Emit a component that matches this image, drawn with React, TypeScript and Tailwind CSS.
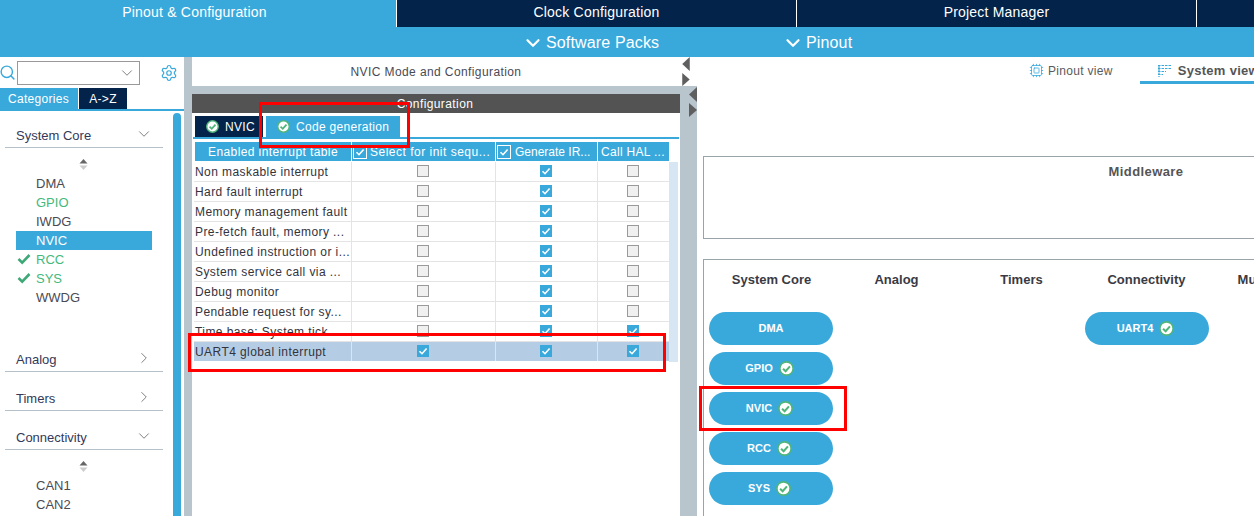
import React from "react";
import { ChevronDown, ChevronRight, Cpu, Search, Settings } from "lucide-react";

const FONT = "font-['Liberation_Sans',Arial,sans-serif]";

// Rond blanc avec coche verte (tabs et boutons)
const CheckBadge = ({ size = 13 }: { size?: number }) => (
  <svg width={size} height={size} viewBox="0 0 14 14" className="shrink-0">
    <circle cx="7" cy="7" r="6.2" fill="#fff" stroke="#4fb57a" strokeWidth="1.5" />
    <path d="M3.8 7.2 L6.2 9.5 L10.2 5" fill="none" stroke="#4fb57a" strokeWidth="1.9" />
  </svg>
);

const Tick = ({ color = "#fff" }: { color?: string }) => (
  <svg width="12" height="12" viewBox="0 0 12 12">
    <path d="M2.5 6.2 L5 8.7 L9.6 3.4" fill="none" stroke={color} strokeWidth="1.6" />
  </svg>
);

const Box = ({ on }: { on: boolean }) =>
  on ? (
    <span className="flex h-3 w-3 items-center justify-center bg-[#39a9dc]">
      <Tick />
    </span>
  ) : (
    <span className="h-3 w-3 border border-[#9a9a9a] bg-[#f0f0f0]" />
  );

const HeaderBox = () => (
  <span className="flex h-[14px] w-[14px] shrink-0 items-center justify-center border border-white">
    <Tick />
  </span>
);

const SortArrows = () => (
  <div className="flex h-[18px] justify-center pr-[1px]">
    <svg width="9" height="12" viewBox="0 0 9 12" className="mt-[3px] ml-[-5px]">
      <path d="M4.5 0 L8.5 4.5 H0.5 Z" fill="#666" />
      <path d="M4.5 11 L8.5 6.5 H0.5 Z" fill="#ccc" />
    </svg>
  </div>
);

const Category = ({ label, open, mt }: { label: string; open?: boolean; mt: string }) => (
  <div className={`${mt} ml-[5px] flex h-[23px] w-[158px] items-center justify-between border-b border-[#b5c0c8] pb-[1px] pl-[11px] pr-[10px] text-[13px] text-[#33395a]`}>
    <span>{label}</span>
    {open ? (
      <ChevronDown size={18} strokeWidth={1} className="mt-[-4px] text-[#555]" />
    ) : (
      <ChevronRight size={18} strokeWidth={1} className="mt-[-4px] text-[#555]" />
    )}
  </div>
);

const SideItem = ({ label, green, tick, active }: { label: string; green?: boolean; tick?: boolean; active?: boolean }) => (
  <div
    className={`relative ml-[16px] flex h-[19px] w-[136px] items-center pl-[20px] text-[13px] ${
      active ? "bg-[#39a9dc] text-white" : green ? "text-[#45b97c]" : "text-[#4a4a55]"
    }`}
  >
    {tick && (
      <svg width="14" height="12" viewBox="0 0 14 12" className="absolute left-[1px] top-[3px]">
        <path d="M1.5 6 L5.2 9.6 L12.5 2" fill="none" stroke="#3fa877" strokeWidth="2.6" />
      </svg>
    )}
    {label}
  </div>
);

const rows: [string, boolean, boolean, boolean][] = [
  ["Non maskable interrupt", false, true, false],
  ["Hard fault interrupt", false, true, false],
  ["Memory management fault", false, true, false],
  ["Pre-fetch fault, memory ...", false, true, false],
  ["Undefined instruction or i...", false, true, false],
  ["System service call via ...", false, true, false],
  ["Debug monitor", false, true, false],
  ["Pendable request for sy...", false, true, false],
  ["Time base: System tick ...", false, true, true],
  ["UART4 global interrupt", true, true, true],
];

const Pill = ({ label, check = true }: { label: string; check?: boolean }) => (
  <div className={`flex h-[33px] w-[124px] items-center justify-center gap-[6px] rounded-full bg-[#39a9dc] text-[11px] font-bold text-white ${check ? "pr-[3px]" : ""}`}>
    <span>{label}</span>
    {check && <CheckBadge size={15} />}
  </div>
);

const TriLeft = () => (
  <svg width="8" height="15" viewBox="0 0 8 15"><path d="M8 0 V15 L0 7.5 Z" fill="#5f5f5f" /></svg>
);
const TriRight = () => (
  <svg width="8" height="14" viewBox="0 0 8 14"><path d="M0 0 V14 L8 7 Z" fill="#5f5f5f" /></svg>
);

const SystemIcon = () => (
  <svg width="14" height="14" viewBox="0 0 14 14" stroke="#39a9dc" strokeWidth="1.2" strokeDasharray="2.5 1" className="shrink-0">
    <path d="M1 1.5 V13" fill="none" />
    <path d="M0 1.5 H14 M0 4.5 H14 M0 7.5 H8 M0 10.5 H5" fill="none" />
  </svg>
);

export default function App() {
  return (
    <div className={`${FONT} relative flex h-[516px] w-[1254px] flex-col overflow-hidden bg-white`}>
      {/* Onglets du haut */}
      <div className="flex h-[27px] pb-0 text-[14px] tracking-[0.2px] text-white">
        <div className="flex w-[396px] items-center justify-center bg-[#39a9dc] pb-[2px] pr-[7px]">Pinout &amp; Configuration</div>
        <div className="ml-px flex w-[399px] items-center justify-center bg-[#03234b] pb-[2px]">Clock Configuration</div>
        <div className="ml-px flex w-[399px] items-center justify-center bg-[#03234b] pb-[2px]">Project Manager</div>
        <div className="ml-px flex-1 bg-[#03234b]" />
      </div>
      <div className="flex h-[30px] items-center bg-[#39a9dc] pt-[1px] text-[16px] tracking-[0.15px] text-white">
        <div className="ml-[522px] flex w-[260px] items-center gap-[2px]">
          <ChevronDown size={22} strokeWidth={2.4} />
          Software Packs
        </div>
        <div className="flex items-center gap-[2px]">
          <ChevronDown size={22} strokeWidth={2.4} />
          Pinout
        </div>
      </div>

      <div className="flex min-h-0 flex-1">
        {/* Panneau gauche */}
        <div className="flex w-[184px] shrink-0">
          <div className="w-[173px] shrink-0">
            <div className="flex h-[31px] w-[184px] items-center">
              <Search size={17} strokeWidth={2} className="ml-[-1px] text-[#39a9dc]" />
              <div className="ml-[1px] flex h-[24px] w-[123px] items-center justify-end border border-[#999] pr-[3px]">
                <ChevronDown size={18} strokeWidth={1} className="text-[#555]" />
              </div>
              <Settings size={18} strokeWidth={1.6} className="ml-[20px] text-[#39a9dc]" />
            </div>
            <div className="flex h-[23px] w-[184px] border-b-2 border-[#39a9dc] text-[12px] tracking-[0.3px] text-white">
              <div className="flex w-[78px] items-center justify-center bg-[#39a9dc] pr-[1px]">Categories</div>
              <div className="ml-px flex w-[48px] items-center justify-center bg-[#03234b]">A-&gt;Z</div>
            </div>
            <Category label="System Core" open mt="mt-[14px]" />
            <div className="mt-[8px]">
              <SortArrows />
            </div>
            <div>
              <SideItem label="DMA" />
              <SideItem label="GPIO" green />
              <SideItem label="IWDG" />
              <SideItem label="NVIC" active />
              <SideItem label="RCC" green tick />
              <SideItem label="SYS" green tick />
              <SideItem label="WWDG" />
            </div>
            <Category label="Analog" mt="mt-[42px]" />
            <Category label="Timers" mt="mt-[16px]" />
            <Category label="Connectivity" open mt="mt-[16px]" />
            <div className="mt-[8px]">
              <SortArrows />
            </div>
            <SideItem label="CAN1" />
            <SideItem label="CAN2" />
          </div>
          <div className="mt-[56px] h-[420px] w-[8px] rounded-t-[4px] bg-[#39a9dc]" />
        </div>

        <div className="w-[8px] shrink-0 bg-[#b8c5cc]" />

        {/* Panneau central */}
        <div className="flex w-[505px] shrink-0 flex-col">
          <div className="flex h-[29px] items-stretch">
            <div className="flex w-[489px] items-center justify-center pr-[1px] text-[12px] tracking-[0.4px] text-[#4a4a55]">
              NVIC Mode and Configuration
            </div>
            <div className="flex flex-col gap-[2px] pl-[1px]">
              <TriLeft />
              <TriRight />
            </div>
          </div>
          <div className="flex min-h-0 flex-1 bg-[#b8c5cc]">
            <div className="mt-[8px] w-[489px] bg-white">
              <div className="flex h-[19px] items-center justify-center bg-[#525352] pr-[2px] text-[12px] tracking-[0.4px] text-white">Configuration</div>
              <div className="mt-[3px] flex h-[21px] gap-[3px] pl-[3px] text-[12px] tracking-[0.3px] text-white">
                <div className="flex w-[68px] items-center gap-[6px] bg-[#03234b] pl-[11px]">
                  <CheckBadge />
                  NVIC
                </div>
                <div className="flex w-[134px] items-center gap-[6px] bg-[#39a9dc] pl-[11px]">
                  <CheckBadge />
                  Code generation
                </div>
              </div>
              <div className="ml-[1px] mr-[1px] h-[2px] bg-[#39a9dc]" />

              <div className="mt-[3px] ml-[2px] flex w-[484px]">
                <div className="w-[475px]">
                  <div className="flex h-[19px] pb-0 text-[12px] text-white">
                    <div className="ml-[1px] flex w-[156px] items-center justify-center bg-[#39a9dc] tracking-[0.4px]">Enabled interrupt table</div>
                    <div className="ml-px flex w-[143px] items-center gap-[3px] bg-[#39a9dc] pl-[1px] tracking-[0.5px]">
                      <HeaderBox />
                      Select for init sequ...
                    </div>
                    <div className="ml-px flex w-[101px] items-center gap-[4px] bg-[#39a9dc] pl-[1px]">
                      <HeaderBox />
                      Generate IR...
                    </div>
                    <div className="ml-px flex w-[71px] items-center bg-[#39a9dc] pl-[3px] tracking-[0.3px]">Call HAL ...</div>
                  </div>
                  <div className="mt-px">
                    {rows.map(([label, a, b, c], i) => (
                      <div key={label} className={`flex h-[20px] border-b border-[#e4e4e4] text-[12px] text-[#33333d] ${i === 9 ? "border-white bg-[#b5cde4]" : ""}`}>
                        <div className="flex w-[158px] items-center border-r border-[#e4e4e4] pl-[1px] tracking-[0.42px] whitespace-nowrap">{label}</div>
                        <div className="flex w-[144px] items-center justify-center border-r border-[#e4e4e4] pr-[1px] pb-[1px]"><Box on={a} /></div>
                        <div className="flex w-[102px] items-center justify-center border-r border-[#e4e4e4] pr-[1px] pb-[1px]"><Box on={b} /></div>
                        <div className="flex w-[70px] items-center justify-center pb-[1px]"><Box on={c} /></div>
                      </div>
                    ))}
                  </div>
                </div>
                <div className="mt-[20px] h-[200px] w-[9px] bg-[#d6e6f3]" />
              </div>
            </div>
            <div className="flex flex-col gap-[1px] pt-px pl-[9px]">
              <TriLeft />
              <TriRight />
            </div>
          </div>
        </div>

        {/* Panneau droit */}
        <div className="min-w-0 flex-1 overflow-hidden">
          <div className="flex h-[27px] text-[12px]">
            <div className="ml-[332px] flex shrink-0 items-center gap-[4px] tracking-[0.3px] whitespace-nowrap text-[#5a5a5a]">
              <Cpu size={15} strokeWidth={1.3} className="text-[#39a9dc]" />
              Pinout view
            </div>
            <div className="ml-[27px] flex w-[120px] shrink-0 items-center gap-[6px] border-b-[3px] border-[#39a9dc] pl-[18px] pt-[4px] text-[13px] font-bold tracking-[0.3px] whitespace-nowrap text-[#555]">
              <SystemIcon />
              System view
            </div>
          </div>
          <div className="ml-[6px] mt-[72px] h-[83px] w-[600px] border border-[#9aa3a8] pt-[5px]">
            <div className="w-[884px] text-center text-[13px] font-bold tracking-[0.4px] text-[#555]">
              Middleware
            </div>
          </div>
          <div className="ml-[6px] mt-[20px] h-[300px] w-[600px] border border-[#9aa3a8] pl-[5px] pt-[10px]">
            <div className="flex h-[20px] text-[13px] font-bold text-[#3a3a44]">
              {["System Core", "Analog", "Timers", "Connectivity", "Multimedia"].map((t) => (
                <div key={t} className="w-[125px] shrink-0 text-center">{t}</div>
              ))}
            </div>
            <div className="mt-[22px] flex">
              <div className="flex w-[375px] flex-col gap-[7px]">
                <Pill label="DMA" check={false} />
                <Pill label="GPIO" />
                <Pill label="NVIC" />
                <Pill label="RCC" />
                <Pill label="SYS" />
              </div>
              <div className="ml-[1px]">
                <Pill label="UART4" />
              </div>
            </div>
          </div>
        </div>
      </div>

      {/* Annotations rouges */}
      <div className="absolute left-[259px] top-[102px] h-[46px] w-[151px] border-[3px] border-[#ff0000]" />
      <div className="absolute left-[188px] top-[333px] h-[39px] w-[478px] border-[3px] border-[#ff0000]" />
      <div className="absolute left-[699px] top-[386px] h-[45px] w-[148px] border-[3px] border-[#ff0000]" />
    </div>
  );
}
